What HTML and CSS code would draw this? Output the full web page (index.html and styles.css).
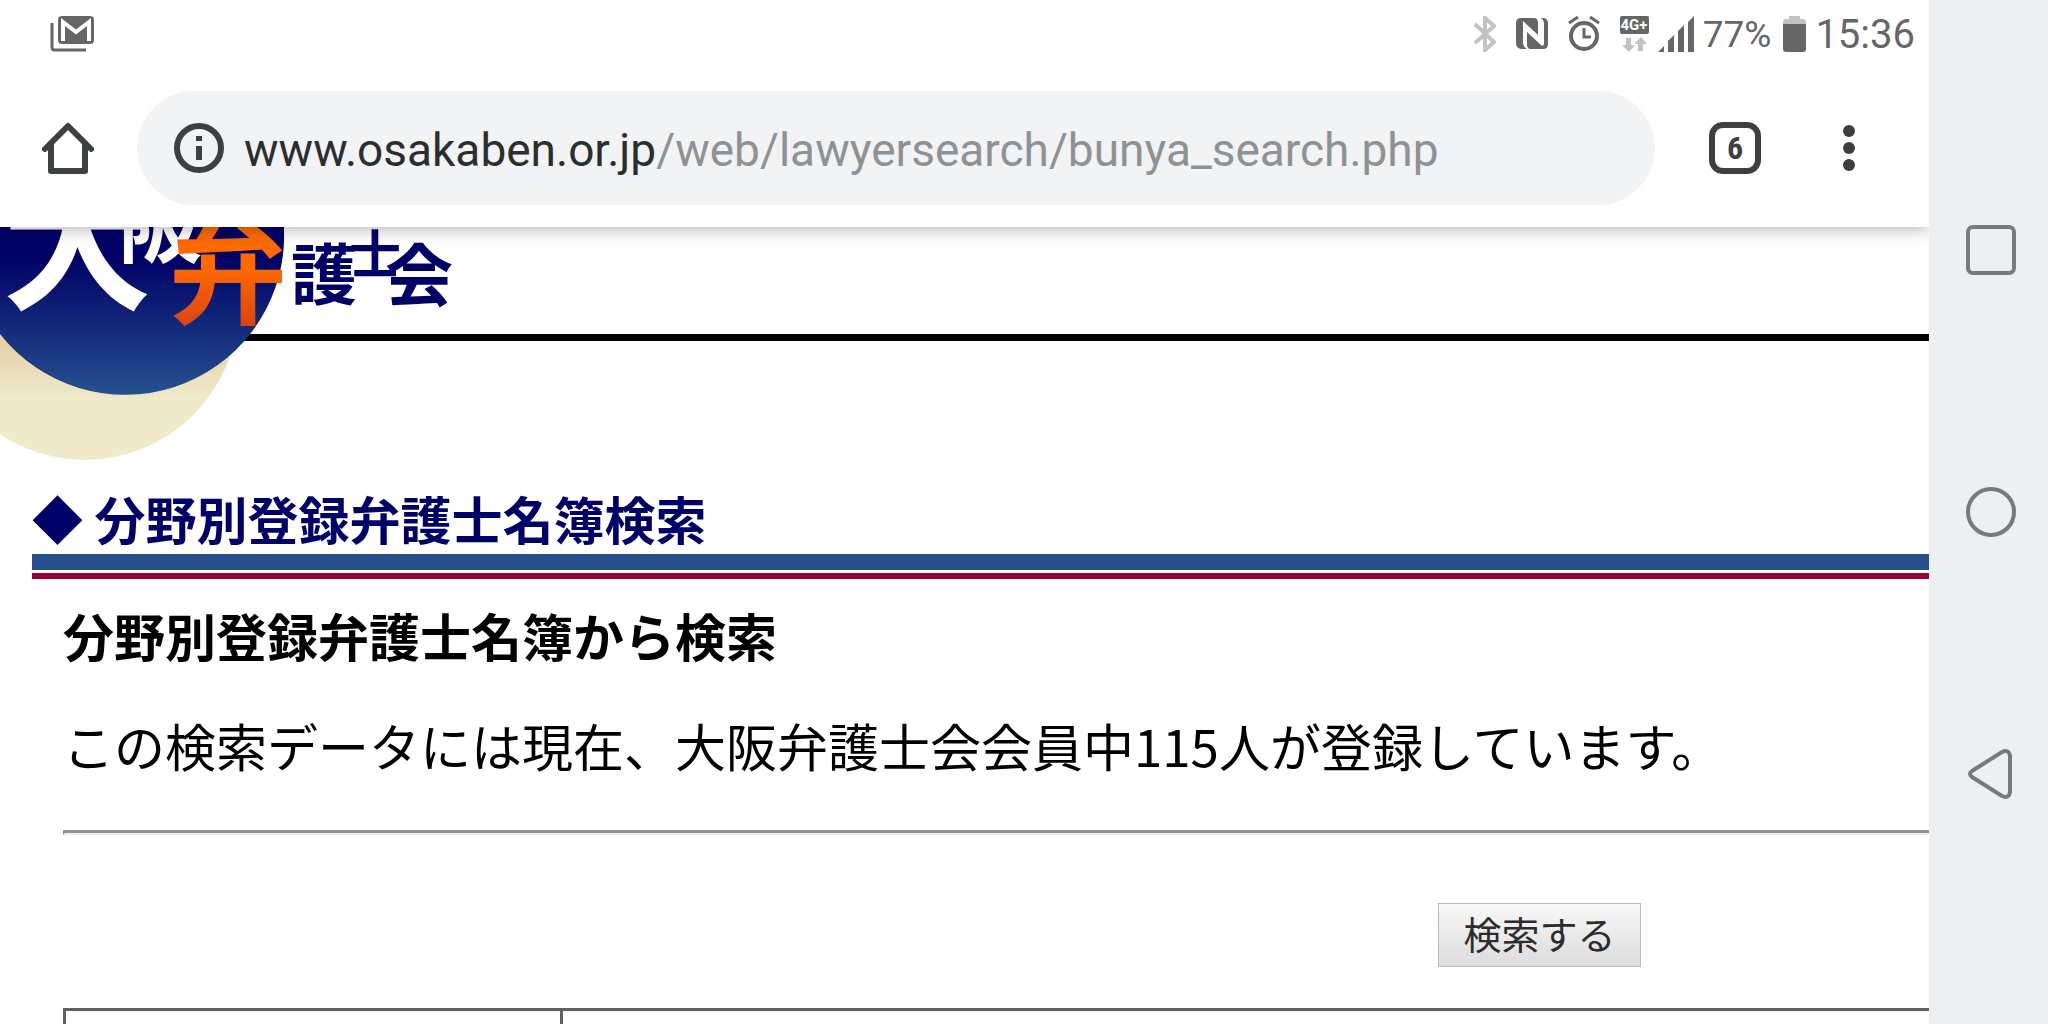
FILE: index.html
```html
<!DOCTYPE html>
<html lang="ja">
<head>
<meta charset="utf-8">
<meta name="viewport" content="width=device-width, initial-scale=1">
<title>分野別登録弁護士名簿検索</title>
<link rel="stylesheet" href="styles.css">
</head>
<body>
<div class="device">
  <div class="screen">
    <div class="status">
      <svg class="status-mail" width="44" height="36" viewBox="0 0 44 36" role="img" aria-label="Gmail">
        <path d="M2 7v24q0 3 3 3h31" fill="none" stroke="#666" stroke-width="3"/>
        <rect x="8" width="36" height="28" rx="4" fill="#666"/>
        <path d="M13 25V6l13 10L39 6v19" fill="none" stroke="#fff" stroke-width="4"/>
      </svg>
      <div class="status-end">
        <svg class="gap-l" width="22" height="36" viewBox="0 0 22 36" role="img" aria-label="Bluetooth">
          <path d="M1 8l19 18-9 8V2l9 8L1 27" fill="none" stroke="#c2c2c2" stroke-width="4"/>
        </svg>
        <svg class="gap-l" width="32" height="32" viewBox="0 0 32 32" role="img" aria-label="NFC">
          <path d="M5 0h14q3 1 3 5v12L7 3v21q0 5 4 7H5q-5-1-5-6V5q0-5 5-5zM25 0h3q4 1 4 5v21q0 5-5 5H14q-3-1-3-4V14l14 13q3 2 3-2V6q0-4-3-6z" fill="#666"/>
        </svg>
        <svg class="gap-l" width="32" height="36" viewBox="0 0 32 36" role="img" aria-label="アラーム">
          <g fill="none" stroke="#666"><circle cx="16" cy="20" r="13" stroke-width="4"/><path d="M16 12v9h7M1 7l9-6M31 7l-9-6" stroke-width="3"/></g>
        </svg>
        <svg class="gap-m" width="29" height="36" viewBox="0 0 29 36" role="img" aria-label="4G+">
          <rect width="29" height="18" rx="2" fill="#666"/>
          <text x="14" y="14" text-anchor="middle" class="net-label">4G+</text>
          <path d="M6 22h5v7h4l-6 7-7-7h4zM18 35h5v-7h4l-6-7-7 7h4z" fill="#c2c2c2"/>
        </svg>
        <svg class="gap-m" width="36" height="36" viewBox="0 0 36 36" role="img" aria-label="電波">
          <path d="M0 36l6-6v6zM10 36V25l6-6v17zM20 36V15l6-6v27zM30 36V6l6-6v36z" fill="#666"/>
        </svg>
        <span class="battery-text">77%</span>
        <svg class="gap-m" width="23" height="36" viewBox="0 0 23 36" role="img" aria-label="電池">
          <path d="M0 8V5l2-2h4V0h11v3h4l2 2v3z" fill="#c2c2c2"/><path d="M0 8h23v25q0 3-3 3H3q-3 0-3-3z" fill="#666"/>
        </svg>
        <time class="clock">15:36</time>
      </div>
    </div>

    <div class="toolbar">
      <button class="icon-button" aria-label="ホーム">
        <svg width="52" height="52" viewBox="0 0 52 52"><path d="M3 27L26 4l23 23M9 23v26h34V23" fill="none" stroke="#3c4043" stroke-width="6" stroke-linecap="round" stroke-linejoin="round"/></svg>
      </button>
      <div class="omnibox">
        <svg width="50" height="50" viewBox="0 0 50 50"><circle cx="25" cy="25" r="22" fill="none" stroke="#3c4043" stroke-width="6"/><path d="M22 13h6v5h-6zM22 23h6v14h-6z" fill="#3c4043"/></svg>
        <div class="url" role="textbox" tabindex="0" aria-label="アドレス"><span class="url-host">www.osakaben.or.jp</span>/web/lawyersearch/bunya_search.php</div>
      </div>
      <button class="tab-count" aria-label="タブ 6">6</button>
      <button class="icon-button" aria-label="メニュー">
        <svg width="12" height="46" viewBox="0 0 12 46" fill="#3c4043"><circle cx="6" cy="6" r="6"/><circle cx="6" cy="23" r="6"/><circle cx="6" cy="40" r="6"/></svg>
      </button>
    </div>

    <main class="page">
      <header class="site-header">
        <svg class="logo" width="460" height="234" viewBox="0 0 460 234" role="img" aria-label="大阪弁護士会">
          <defs>
            <linearGradient id="navy" gradientUnits="userSpaceOnUse" x1="0" y1="30" x2="0" y2="169"><stop offset="0" stop-color="#006"/><stop offset="1" stop-color="#26528f"/></linearGradient>
            <linearGradient id="cream" gradientUnits="userSpaceOnUse" x1="0" y1="107" x2="0" y2="175"><stop offset="0" stop-color="#e3cfa5"/><stop offset="1" stop-color="#efebca"/></linearGradient>
            <linearGradient id="orange" gradientUnits="userSpaceOnUse" x1="0" y1="40" x2="0" y2="100"><stop offset="0" stop-color="#ff6a00"/><stop offset="1" stop-color="#d84315"/></linearGradient>
          </defs>
          <circle cx="85" cy="80" r="153" fill="url(#cream)"/>
          <path d="M0 0H284V14A159 159 0 0 1 0 107z" fill="url(#navy)"/>
          <g class="logo-text">
            <text x="2" y="71" font-size="150" fill="#fff">大</text>
            <text x="118" y="29" font-size="84" fill="#fff">阪</text>
            <text x="169" y="88" font-size="118" fill="url(#orange)">弁</text>
            <text x="291" y="72" font-size="66" fill="#006">護</text>
            <text x="349" y="47" font-size="52" fill="#006">士</text>
            <text x="385" y="74" font-size="68" fill="#006">会</text>
          </g>
        </svg>
      </header>

      <h1 class="title">◆ 分野別登録弁護士名簿検索</h1>
      <div class="content">
        <h2 class="subtitle">分野別登録弁護士名簿から検索</h2>
        <p class="lead">この検索データには現在、大阪弁護士会会員中115人が登録しています。</p>
        <hr class="divider">
        <form class="search">
          <button class="search-button" type="button">検索する</button>
        </form>
        <table class="fields"><tbody><tr><td class="field-name"></td><td></td></tr></tbody></table>
      </div>
    </main>
  </div>

  <nav class="nav-keys" aria-label="ナビゲーション">
    <button class="icon-button" aria-label="アプリ履歴"><svg width="50" height="50" viewBox="0 0 50 50"><rect x="2" y="2" width="46" height="46" rx="5" class="key"/></svg></button>
    <button class="icon-button" aria-label="ホーム"><svg width="50" height="50" viewBox="0 0 50 50"><circle cx="25" cy="25" r="23" class="key"/></svg></button>
    <button class="icon-button" aria-label="戻る"><svg width="50" height="50" viewBox="0 0 50 50"><path d="M6 22L36 3q7-3 8 4v36q-1 7-8 4L6 28q-4-3 0-6z" class="key"/></svg></button>
  </nav>
</div>
</body>
</html>
```
FILE: styles.css
```css
* { box-sizing: border-box; }
body {
  margin: 0;
  background: #fff;
  color: #000;
  font-family: "Noto Sans CJK JP", sans-serif;
}
button { font: inherit; color: inherit; cursor: pointer; }
svg { display: block; flex: none; }

.device {
  display: grid;
  grid-template-columns: minmax(0, 1fr) 119px;
  height: 100vh;
}
.screen {
  display: flex;
  flex-direction: column;
  overflow: hidden;
}

/* Status bar */
.status {
  display: flex;
  justify-content: space-between;
  align-items: center;
  flex: none;
  height: 68px;
  padding: 0 14px 0 50px;
  color: #666;
  font-family: Roboto, sans-serif;
}
.status-end { display: flex; align-items: center; }
.gap-l { margin-right: 20px; }
.gap-m { margin-right: 9px; }
.net-label { font: bold 15px Roboto, sans-serif; fill: #fff; }
.battery-text { font-size: 37px; margin-right: 12px; }
.clock { font-size: 40px; }

/* Browser toolbar */
.toolbar {
  position: relative;
  z-index: 1;
  display: flex;
  align-items: center;
  flex: none;
  height: 159px;
  padding: 0 74px 0 42px;
  background: #fff;
  box-shadow: 0 2px 16px rgba(0, 0, 0, .3);
  clip-path: inset(0 0 -24px 0);
}
.icon-button {
  display: flex;
  justify-content: center;
  padding: 0;
  border: 0;
  background: none;
}
.omnibox {
  display: flex;
  align-items: center;
  gap: 20px;
  flex: 1;
  height: 114px;
  margin: 0 54px 0 43px;
  padding-left: 37px;
  border-radius: 57px;
  background: #f1f3f4;
}
.url {
  padding-top: 4px;
  color: #8f9294;
  font: 46px Roboto, sans-serif;
  white-space: nowrap;
}
.url-host { color: #2b2e31; }
.tab-count {
  width: 52px;
  height: 52px;
  margin-right: 82px;
  padding: 0;
  border: 6px solid #3c4043;
  border-radius: 14px;
  background: none;
  color: #3c4043;
  font: bold 32px/40px "Roboto Condensed", Roboto, sans-serif;
}

/* Web page */
.page { flex: 1; min-height: 0; overflow: hidden; }
.site-header {
  position: relative;
  height: 114px;
  margin-bottom: 142px;
  border-bottom: 7px solid #000;
}
.logo { position: absolute; top: 0; left: 0; }
.logo-text { font-family: "Noto Sans CJK JP", sans-serif; font-weight: 700; }
.title {
  margin: 0 0 0 32px;
  padding-bottom: 4px;
  border-bottom: 6px solid #990033;
  background: linear-gradient(#264f8c, #264f8c) left bottom 3px / 100% 16px no-repeat;
  color: #006;
  font-size: 51px;
  line-height: 70px;
  height: 96px;
}
.content { margin-left: 63px; }
.subtitle {
  margin: 0;
  padding-top: 19px;
  font-size: 51px;
  line-height: 74px;
}
.lead {
  margin: 0;
  padding-top: 36px;
  font-size: 51px;
  line-height: 74px;
  white-space: nowrap;
}
.divider {
  height: 5px;
  margin: 48px 0 0;
  border: 3px solid #949494;
  border-width: 3px 0 0 2px;
  border-bottom: 2px solid #eee;
}
.search {
  display: flex;
  justify-content: flex-end;
  margin: 68px 288px 41px 0;
}
.search-button {
  width: 203px;
  height: 64px;
  padding: 0;
  border: 1px solid #bbb;
  background: linear-gradient(#f8f8f8, #dcdcdc);
  color: #2c2c2c;
  font-size: 38px;
  line-height: 56px;
  padding-bottom: 4px;
}
.fields {
  width: 100%;
  border-collapse: collapse;
}
.fields td {
  height: 80px;
  border: 3px solid #606060;
  border-right: 0;
}
.fields .field-name { width: 497px; }

/* System navigation */
.nav-keys {
  display: flex;
  flex-direction: column;
  align-items: center;
  justify-content: center;
  gap: 212px;
  padding-left: 4px;
  background: #edeff1;
}
.key { fill: none; stroke: #797a7c; stroke-width: 4; }
```
